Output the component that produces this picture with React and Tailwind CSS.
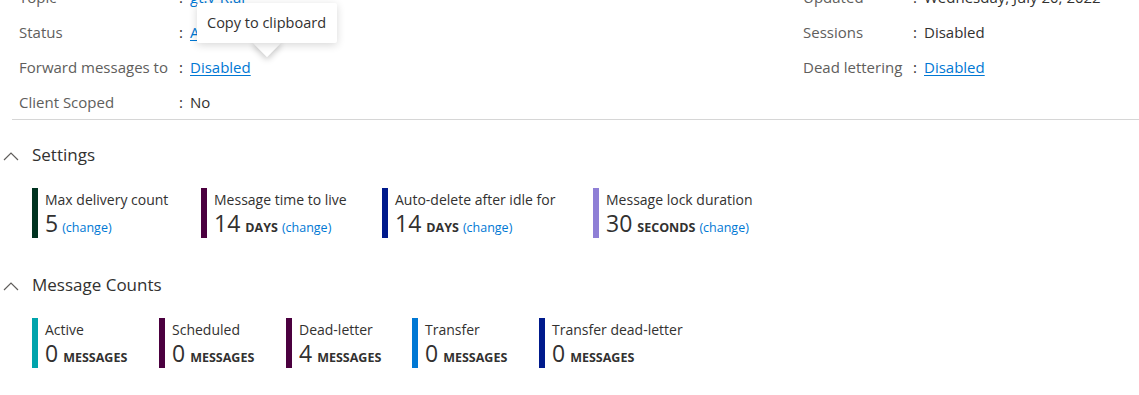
import React from "react";

const leftRows = [
  { label: "Topic", value: "gt.v-R.al", link: true },
  { label: "Status", value: "Active", link: true },
  { label: "Forward messages to", value: "Disabled", link: true },
  { label: "Client Scoped", value: "No" },
];

const rightRows = [
  { label: "Updated", value: "Wednesday, July 20, 2022" },
  { label: "Sessions", value: "Disabled" },
  { label: "Dead lettering", value: "Disabled", link: true },
];

const settings = [
  { label: "Max delivery count", value: "5", bar: "bg-[#003320]", w: "w-[169px]" },
  { label: "Message time to live", value: "14", unit: "DAYS", bar: "bg-[#4b003f]", w: "w-[181px]" },
  { label: "Auto-delete after idle for", value: "14", unit: "DAYS", bar: "bg-[#001a8c]", w: "w-[211px]" },
  { label: "Message lock duration", value: "30", unit: "SECONDS", bar: "bg-[#8f7fd6]", w: "w-[200px]" },
];

const counts = [
  { label: "Active", value: "0", bar: "bg-[#00a4ac]", w: "w-[127px]" },
  { label: "Scheduled", value: "0", bar: "bg-[#4b003f]", w: "w-[127px]" },
  { label: "Dead-letter", value: "4", bar: "bg-[#4b003f]", w: "w-[126px]" },
  { label: "Transfer", value: "0", bar: "bg-[#0078d4]", w: "w-[127px]" },
  { label: "Transfer dead-letter", value: "0", bar: "bg-[#001a8c]", w: "w-[160px]" },
];

function Row({ row, labelW }) {
  return (
    <div className="flex h-[35px] items-center text-[15px]">
      <span className={`${labelW} text-[#605e5c]`}>{row.label}</span>
      <span className="w-[11px] text-[#323130]">:</span>
      {row.link ? (
        <span className="text-[#0078d4] underline underline-offset-2">{row.value}</span>
      ) : (
        <span className="text-[#323130]">{row.value}</span>
      )}
    </div>
  );
}

function SectionHeader({ title }) {
  return (
    <div className="flex h-[24px] items-center">
      <svg width="32" height="24" viewBox="0 0 32 24" className="shrink-0">
        <path d="M4 17 L11 10 L18 17" fill="none" stroke="#605e5c" strokeWidth="1.2" />
      </svg>
      <span className="text-[17px] text-[#323130]">{title}</span>
    </div>
  );
}

function Tile({ item, unitLabel, change }) {
  return (
    <div className={`flex h-[50px] shrink-0 ${item.w}`}>
      <div className={`w-[6px] shrink-0 ${item.bar}`} />
      <div className="pl-[7px]">
        <div className="mt-[2px] text-[14px] leading-[20px] text-[#323130]">{item.label}</div>
        <div className="flex items-baseline leading-[26px] text-[#323130]">
          <span className="text-[23px]">{item.value}</span>
          {(item.unit || unitLabel) && (
            <span className="ml-[5px] text-[12.5px] font-bold">{item.unit || unitLabel}</span>
          )}
          {change && <span className="ml-[4px] text-[12.5px] text-[#0078d4]">(change)</span>}
        </div>
      </div>
    </div>
  );
}

export default function App() {
  return (
    <div className="h-[395px] w-[1139px] overflow-hidden bg-white font-['Segoe_UI','Open_Sans',sans-serif]">
      {/* Properties */}
      <div className="relative mt-[-20px] flex">
        <div className="ml-[19px]">
          {leftRows.map((r) => (
            <Row key={r.label} row={r} labelW="w-[160px]" />
          ))}
        </div>
        <div className="ml-auto w-[336px]">
          {rightRows.map((r) => (
            <Row key={r.label} row={r} labelW="w-[110px]" />
          ))}
        </div>

        {/* Tooltip */}
        <div className="absolute left-[197px] top-[23px] h-[40px] w-[140px]">
          <div className="absolute left-[60px] top-[30px] h-[20px] w-[20px] rotate-45 bg-white shadow-[2px_2px_6px_rgba(0,0,0,0.22)]" />
          <div className="relative flex h-full items-center rounded-[2px] bg-white pl-[10px] text-[14.5px] text-[#323130] shadow-[0_2px_8px_rgba(0,0,0,0.16)]">
            Copy to clipboard
          </div>
          <div className="absolute left-[56px] top-[30px] h-[10px] w-[28px] bg-white" />
        </div>
      </div>

      <div className="ml-[12px] mt-[-1px] border-t border-[#d6d6d6]" />

      {/* Settings */}
      <div className="mt-[23px]">
        <SectionHeader title="Settings" />
        <div className="ml-[32px] mt-[21px] flex">
          {settings.map((s) => (
            <Tile key={s.label} item={s} change />
          ))}
        </div>
      </div>

      {/* Message Counts */}
      <div className="mt-[35px]">
        <SectionHeader title="Message Counts" />
        <div className="ml-[32px] mt-[21px] flex">
          {counts.map((c) => (
            <Tile key={c.label} item={c} unitLabel="MESSAGES" />
          ))}
        </div>
      </div>
    </div>
  );
}
